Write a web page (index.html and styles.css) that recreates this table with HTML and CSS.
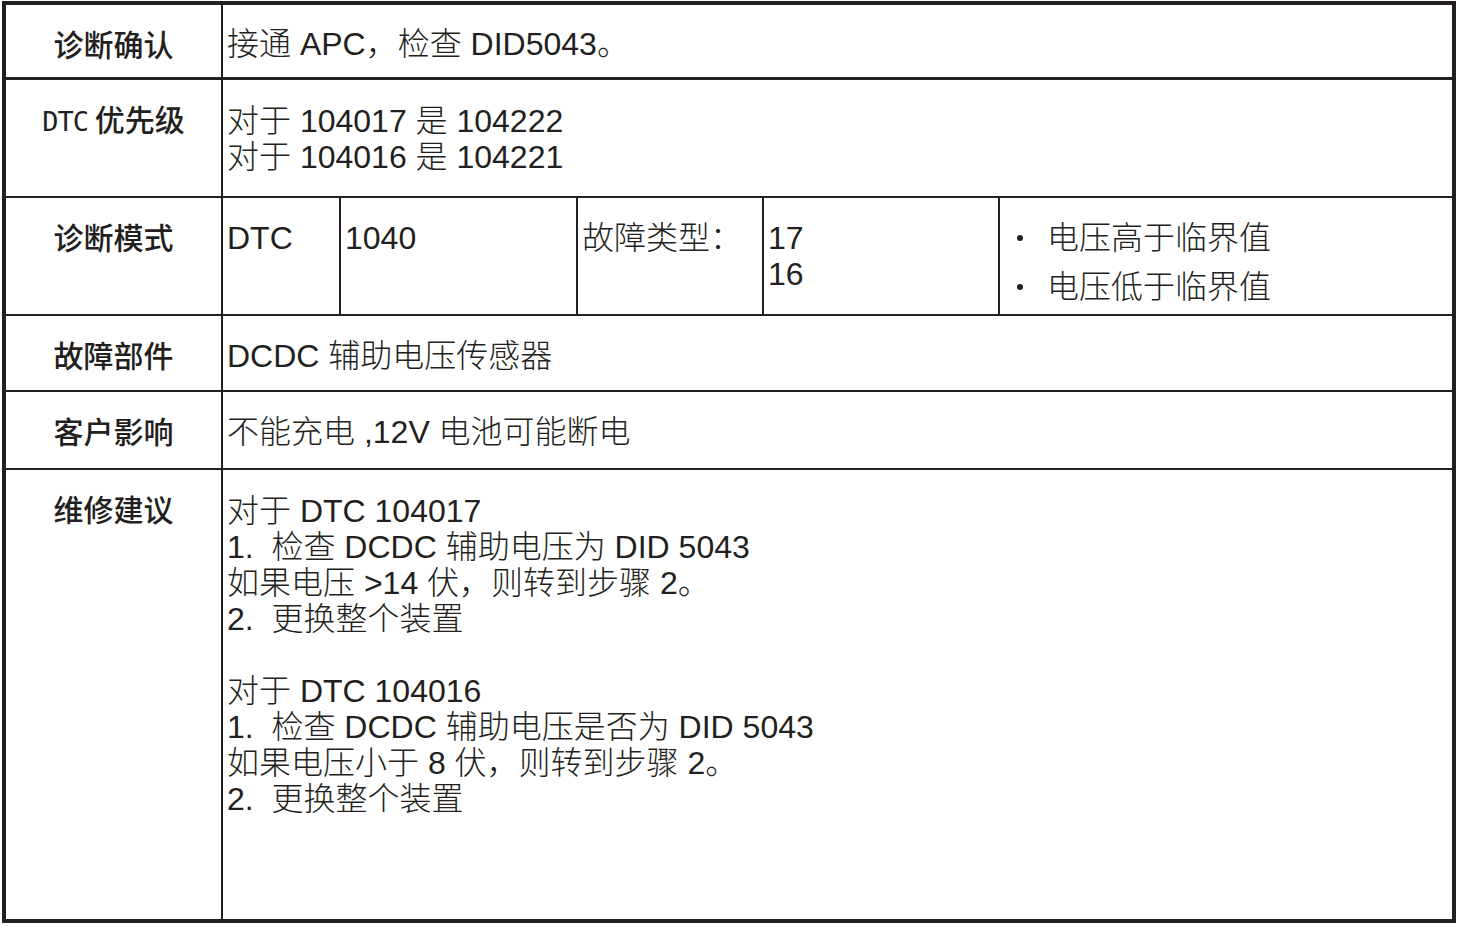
FILE: index.html
```html
<!DOCTYPE html>
<html lang="zh-CN">
<head>
<meta charset="utf-8">
<title>DTC 1040</title>
<link rel="stylesheet" href="styles.css">
</head>
<body>
<div class="sheet">
  <div class="row r1">
    <div class="label">诊断确认</div>
    <div class="content">接通 APC，检查 DID5043。</div>
  </div>
  <div class="row r2">
    <div class="label"><span class="mono">DTC</span> 优先级</div>
    <div class="content">对于 104017 是 104222<br>对于 104016 是 104221</div>
  </div>
  <div class="row r3">
    <div class="label">诊断模式</div>
    <div class="sub s1">DTC</div>
    <div class="sub s2">1040</div>
    <div class="sub s3">故障类型：</div>
    <div class="sub s4">17<br>16</div>
    <div class="sub s5">
      <ul class="bullets">
        <li>电压高于临界值</li>
        <li>电压低于临界值</li>
      </ul>
    </div>
  </div>
  <div class="row r4">
    <div class="label">故障部件</div>
    <div class="content">DCDC 辅助电压传感器</div>
  </div>
  <div class="row r5">
    <div class="label">客户影响</div>
    <div class="content">不能充电 ,12V 电池可能断电</div>
  </div>
  <div class="row r6">
    <div class="label">维修建议</div>
    <div class="content steps">
      <div class="block">对于 DTC 104017<br>1.&nbsp;&nbsp;检查 DCDC 辅助电压为 DID 5043<br>如果电压 &gt;14 伏，则转到步骤 2。<br>2.&nbsp;&nbsp;更换整个装置</div>
      <div class="block">对于 DTC 104016<br>1.&nbsp;&nbsp;检查 DCDC 辅助电压是否为 DID 5043<br>如果电压小于 8 伏，则转到步骤 2。<br>2.&nbsp;&nbsp;更换整个装置</div>
    </div>
  </div>
</div>
</body>
</html>
```
FILE: styles.css
```css
html, body {
  margin: 0;
  padding: 0;
  background: #ffffff;
}

.sheet {
  box-sizing: border-box;
  width: 1454px;
  height: 922px;
  margin: 1px 0 0 2px;
  border: 4px solid #231f20;
  display: flex;
  flex-direction: column;
  color: #231f20;
}

.row {
  display: flex;
  flex: none;
  border-bottom: 2px solid #231f20;
}

.r1 { height: 72px; border-bottom-width: 3px; }
.r2 { height: 116px; }
.r3 { height: 116px; }
.r4 { height: 74px; }
.r5 { height: 76px; }
.r6 { flex: 1; border-bottom: 0; }

.label {
  flex: none;
  width: 215px;
  border-right: 2px solid #231f20;
  padding-top: 20px;
  text-align: center;
  font-family: "Noto Sans CJK SC", sans-serif;
  font-weight: 500;
  font-size: 30px;
  line-height: 36px;
}

.mono {
  font-family: "DejaVu Sans Mono", monospace;
  font-size: 27px;
  letter-spacing: -1px;
}

.content,
.sub {
  padding: 22px 0 0 4px;
  font-family: "Liberation Sans", "Noto Sans CJK SC", sans-serif;
  font-weight: 300;
  font-size: 32px;
  line-height: 36px;
  white-space: nowrap;
}

.r1 .content { padding-top: 21px; }
.r2 .content,
.r6 .content { padding-top: 23px; }

.content { flex: 1; }

.sub {
  flex: none;
  border-right: 2px solid #231f20;
}
.s1 { width: 112px; }
.s2 { width: 231px; }
.s3 { width: 180px; }
.s4 { width: 230px; }
.s5 { flex: 1; border-right: 0; padding-left: 0; }

.bullets {
  list-style: none;
  margin: 0;
  padding: 0;
  display: flex;
  flex-direction: column;
  gap: 13px;
}

.bullets li {
  display: flex;
  align-items: center;
}

.bullets li::before {
  content: "";
  flex: none;
  width: 6px;
  height: 6px;
  border-radius: 50%;
  background: #231f20;
  margin: 0 24px 0 17px;
}

.steps {
  display: flex;
  flex-direction: column;
  gap: 36px;
}
```
